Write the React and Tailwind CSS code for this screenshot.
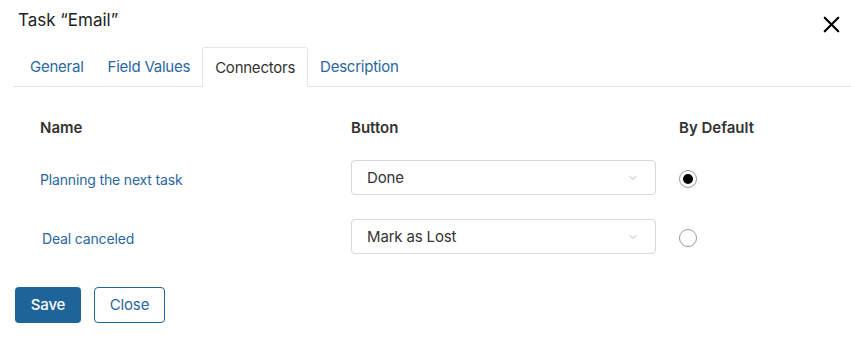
import { X, ChevronDown } from 'lucide-react';

const tabs = ['General', 'Field Values', 'Connectors', 'Description'];

const rows = [
  { name: 'Planning the next task', button: 'Done', checked: true, indent: 'pl-0' },
  { name: 'Deal canceled', button: 'Mark as Lost', checked: false, indent: 'pl-[2px]' },
];

export default function App() {
  return (
    <div className="w-[851px] h-[337px] bg-white font-['Inter',sans-serif] text-[#333]">
      {/* Header */}
      <div className="flex items-center justify-between pl-[18px] pr-[6px] pt-[8px] h-[32px]">
        <h1 className="text-[17px] leading-6 text-[#222]">Task “Email”</h1>
        <X className="w-[27px] h-[27px] mt-[8px] text-black" strokeWidth={1.9} />
      </div>

      {/* Tabs */}
      <div className="mt-[15px] ml-[13px] flex border-b border-[#e3e5ea] h-[40px] items-end tracking-[-0.015em]">
        {tabs.map((tab) => {
          const active = tab === 'Connectors';
          return (
            <div
              key={tab}
              className={
                active
                  ? 'h-[40px] -mb-px flex items-center pt-[2px] px-[12px] text-[15px] text-[#333] border border-[#e3e5ea] border-b-white bg-white rounded-t-[3px]'
                  : 'h-[40px] flex items-center pt-[2px] px-[12px] text-[15px] text-[#2a67a0] first:pl-[17px]'
              }
            >
              {tab}
            </div>
          );
        })}
      </div>

      {/* Connectors table */}
      <div className="pl-[40px] pt-[30px]">
        <div className="grid grid-cols-[311px_328px_auto] items-center h-[22px] text-[15px] font-semibold text-[#333]">
          <span>Name</span>
          <span>Button</span>
          <span>By Default</span>
        </div>
        <div className="mt-[21px] flex flex-col gap-[24px] tracking-[-0.01em]">
          {rows.map((row) => (
            <div key={row.name} className="grid grid-cols-[311px_328px_auto] items-center h-[35px]">
              <span className={`${row.indent} text-[14px] text-[#2a67a0] pt-[4px]`}>{row.name}</span>
              <div className="w-[305px] h-[35px] border border-[#d8d8d8] rounded-[4px] flex items-center justify-between pl-[15px] pr-[16px] text-[15px] text-[#333]">
                <span className="pt-[1px]">{row.button}</span>
                <ChevronDown className="w-[12px] h-[12px] text-[#999]" strokeWidth={1.5} />
              </div>
              <div className="w-[18px] h-[18px] mt-[2px] rounded-full border border-[#999] flex items-center justify-center bg-white">
                {row.checked && <div className="w-[10px] h-[10px] rounded-full bg-black" />}
              </div>
            </div>
          ))}
        </div>
      </div>

      {/* Footer buttons */}
      <div className="flex gap-[13px] pl-[15px] pt-[33px] tracking-[-0.01em]">
        <button className="w-[66px] h-[36px] pt-[1px] rounded-[4px] bg-[#1f6498] text-white text-[15px] font-medium">
          Save
        </button>
        <button className="w-[71px] h-[36px] pt-[1px] rounded-[4px] border border-[#1f6498] text-[#2a67a0] text-[15px] bg-white">
          Close
        </button>
      </div>
    </div>
  );
}
